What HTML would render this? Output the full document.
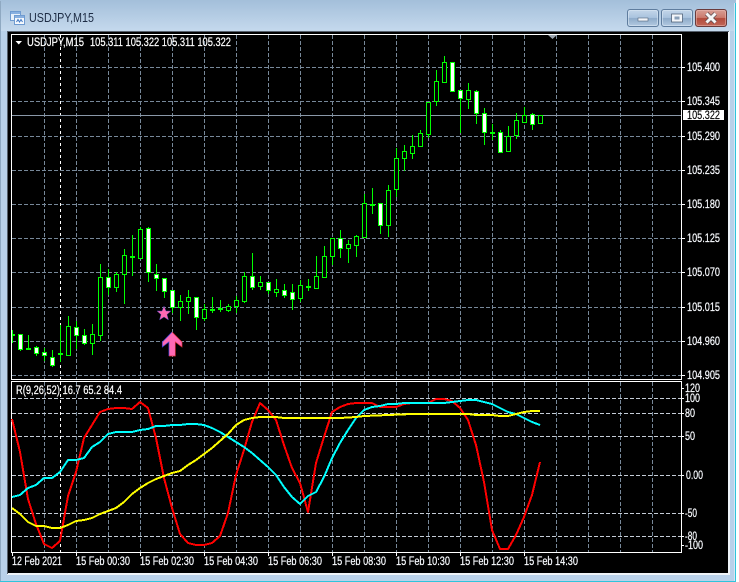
<!DOCTYPE html>
<html>
<head>
<meta charset="utf-8">
<title>USDJPY,M15</title>
<style>
html,body{margin:0;padding:0;background:#fff;width:739px;height:582px;overflow:hidden}
svg{display:block}
text{font-family:"Liberation Sans",sans-serif;font-size:11.5px;fill:#fff;stroke:#fff;stroke-width:.22px}
.ax{font-size:11.5px;fill:#f4f8ff}
.ttl{font-size:12.5px;fill:#1d2c44;stroke:none}
.blk{fill:#000;stroke:#000;stroke-width:.15px}
</style>
</head>
<body>
<svg width="739" height="582" viewBox="0 0 739 582" xmlns="http://www.w3.org/2000/svg">
<defs>
<linearGradient id="fr" x1="0" y1="0" x2="0" y2="1">
<stop offset="0" stop-color="#a9c4de"/><stop offset="0.05" stop-color="#b9d1e9"/><stop offset="1" stop-color="#b9d1ea"/>
</linearGradient>
<linearGradient id="ttl" x1="0" y1="0" x2="0" y2="1">
<stop offset="0" stop-color="#a3bfda"/><stop offset="1" stop-color="#c5d9ed"/>
</linearGradient>
<linearGradient id="btn" x1="0" y1="0" x2="0" y2="1">
<stop offset="0" stop-color="#c5d7ea"/><stop offset="0.48" stop-color="#a9c3de"/><stop offset="0.52" stop-color="#8eabca"/><stop offset="1" stop-color="#b4cbe2"/>
</linearGradient>
<linearGradient id="cls" x1="0" y1="0" x2="0" y2="1">
<stop offset="0" stop-color="#d8a096"/><stop offset="0.48" stop-color="#cb7a6d"/><stop offset="0.52" stop-color="#b24a3b"/><stop offset="1" stop-color="#c2685a"/>
</linearGradient>
</defs>

<!-- window frame -->
<path d="M0 582V5Q0 0 5 0H730Q736 0 736 5V582Z" fill="url(#fr)"/>
<rect x="0" y="0" width="736" height="31" fill="url(#ttl)"/>
<rect x="0" y="1" width="1" height="581" fill="#8fa9c2"/>
<rect x="0" y="581" width="736" height="1" fill="#2fc4dc"/>
<rect x="735" y="3" width="1" height="579" fill="#2fc4dc"/>
<rect x="734" y="3" width="1" height="578" fill="#d8e6f3"/>

<!-- title icon -->
<g shape-rendering="crispEdges">
<rect x="10.5" y="11.5" width="10" height="9" fill="#e9f1fa" stroke="#6f9bd0"/>
<rect x="11" y="12" width="9" height="2" fill="#88b0e0"/>
<rect x="14.5" y="15.5" width="10" height="9" fill="#f6f9fd" stroke="#6f9bd0"/>
<rect x="15" y="16" width="9" height="2" fill="#88b0e0"/>
</g>
<path d="M16.5 22L18 19.5L19.5 22L21 19.5L22.5 22" fill="none" stroke="#3f78c4" stroke-width="1"/>
<text class="ttl" x="29" y="22" textLength="65" lengthAdjust="spacingAndGlyphs">USDJPY,M15</text>

<!-- buttons -->
<rect x="627.5" y="9.5" width="31" height="17" rx="2.5" fill="url(#btn)" stroke="#5f7d9e"/>
<rect x="628.5" y="10.5" width="29" height="15" rx="2" fill="none" stroke="#dbe7f3" stroke-opacity=".6"/>
<rect x="638" y="18" width="10" height="3" fill="#f3f6fa" stroke="#53647a" stroke-width=".6"/>
<rect x="661.5" y="9.5" width="31" height="17" rx="2.5" fill="url(#btn)" stroke="#5f7d9e"/>
<rect x="662.5" y="10.5" width="29" height="15" rx="2" fill="none" stroke="#dbe7f3" stroke-opacity=".6"/>
<rect x="671.5" y="14" width="11" height="8" fill="#f3f6fa" stroke="#53647a" stroke-width=".8"/>
<rect x="674.5" y="16.5" width="5" height="3" fill="#8aa0b8"/>
<rect x="695.5" y="9.5" width="31" height="17" rx="2.5" fill="url(#cls)" stroke="#6a3b3c"/>
<rect x="696.5" y="10.5" width="29" height="15" rx="2" fill="none" stroke="#eebdb5" stroke-opacity=".5"/>
<path d="M706.5 13.5L715.5 22.5M715.5 13.5L706.5 22.5" stroke="#5a4a50" stroke-width="4.4"/>
<path d="M706.5 13.5L715.5 22.5M715.5 13.5L706.5 22.5" stroke="#f6f6f6" stroke-width="3"/>

<!-- client -->
<rect x="7" y="31" width="723" height="544" fill="#eef3f8"/>
<rect x="7" y="31" width="1" height="543" fill="#56606c"/>
<rect x="7" y="31" width="722" height="1" fill="#56606c"/>
<rect x="8" y="32" width="720" height="541" fill="#000"/>

<!-- grid main -->
<g shape-rendering="crispEdges" fill="none" stroke="#778899" stroke-width="1">
<path stroke-dasharray="4 2" d="M12 67.5H681M12 101.5H681M12 136.5H681M12 170.5H681M12 204.5H681M12 238.5H681M12 272.5H681M12 307.5H681M12 341.5H681M12 375.5H681"/>
<path stroke-dasharray="4 2" d="M44.5 35V379M76.5 35V379M108.5 35V379M140.5 35V379M172.5 35V379M204.5 35V379M236.5 35V379M268.5 35V379M300.5 35V379M332.5 35V379M364.5 35V379M396.5 35V379M428.5 35V379M460.5 35V379M492.5 35V379M524.5 35V379M556.5 35V379M588.5 35V379M620.5 35V379M652.5 35V379"/>
<path stroke-dasharray="4 2" d="M44.5 382V552M76.5 382V552M108.5 382V552M140.5 382V552M172.5 382V552M204.5 382V552M236.5 382V552M268.5 382V552M300.5 382V552M332.5 382V552M364.5 382V552M396.5 382V552M428.5 382V552M460.5 382V552M492.5 382V552M524.5 382V552M556.5 382V552M588.5 382V552M620.5 382V552M652.5 382V552"/>
<path stroke="#c4ccd6" stroke-dasharray="4 2" d="M12 398.5H681M12 413.5H681M12 436.5H681M12 475.5H681M12 513.5H681M12 536.5H681"/>
<path stroke="#fff" stroke-dasharray="3 3" d="M60.5 35V379M60.5 382V552"/>
<path stroke="#8a98a8" d="M12 115.5H681"/>
</g>

<!-- wicks -->
<path shape-rendering="crispEdges" fill="none" stroke="#00ff00" stroke-width="1" d="M12.5 330V343M20.5 334V351M28.5 335V350M36.5 346V356M44.5 348V361M52.5 350V367M60.5 325V362M68.5 316V355M76.5 321V349M84.5 329V345M92.5 324V355M100.5 264V341M108.5 269V295M116.5 272V292M124.5 249V304M132.5 235V276M140.5 227V258M148.5 227V282M156.5 264V291M164.5 278V298M172.5 290V313M180.5 295V321M188.5 290V314M196.5 297V330M204.5 304V321M212.5 297V313M220.5 300V312M228.5 304V312M236.5 296V313M244.5 272V303M252.5 253V290M260.5 276V290M268.5 282V294M276.5 279V297M284.5 284V298M292.5 284V310M300.5 280V302M308.5 279V291M316.5 256V289M324.5 246V277M332.5 238V265M340.5 230V258M348.5 240V263M356.5 235V257M364.5 194V237M372.5 188V214M380.5 203V234M388.5 185V237M396.5 148V197M404.5 145V171M412.5 135V159M420.5 130V146M428.5 102V138M436.5 70V106M444.5 56V83M460.5 90V133M468.5 83V109M476.5 90V124M484.5 108V145M492.5 124V140M500.5 130V152M508.5 126V152M516.5 113V139M524.5 107V123M532.5 113V130"/>
<!-- doji -->
<path shape-rendering="crispEdges" fill="none" stroke="#00ff00" stroke-width="2" d="M12 335H15M26 349H31M58 354H63M130 257H135M210 310H215M218 309H223M306 287H311M370 205H375M490 133H495"/>
<!-- hollow bodies -->
<path shape-rendering="crispEdges" fill="#000" stroke="#00ff00" stroke-width="1" d="M66.5 326.5h4V355.5h-4zM90.5 334.5h4V343.5h-4zM98.5 277.5h4V335.5h-4zM114.5 274.5h4V287.5h-4zM122.5 255.5h4V274.5h-4zM138.5 229.5h4V258.5h-4zM178.5 301.5h4V307.5h-4zM186.5 297.5h4V301.5h-4zM202.5 309.5h4V318.5h-4zM226.5 306.5h4V310.5h-4zM234.5 300.5h4V306.5h-4zM242.5 276.5h4V301.5h-4zM258.5 282.5h4V286.5h-4zM274.5 289.5h4V292.5h-4zM298.5 285.5h4V298.5h-4zM314.5 276.5h4V288.5h-4zM322.5 256.5h4V277.5h-4zM330.5 238.5h4V256.5h-4zM346.5 244.5h4V248.5h-4zM354.5 236.5h4V245.5h-4zM362.5 203.5h4V237.5h-4zM386.5 190.5h4V225.5h-4zM394.5 158.5h4V189.5h-4zM402.5 151.5h4V158.5h-4zM410.5 146.5h4V153.5h-4zM418.5 133.5h4V146.5h-4zM426.5 102.5h4V134.5h-4zM434.5 81.5h4V101.5h-4zM442.5 62.5h4V82.5h-4zM466.5 90.5h4V99.5h-4zM506.5 136.5h4V151.5h-4zM514.5 120.5h4V135.5h-4zM522.5 115.5h4V122.5h-4zM538.5 115.5h4V123.5h-4z"/>
<!-- filled bodies -->
<path shape-rendering="crispEdges" fill="#fff" stroke="#00ff00" stroke-width="1" d="M18.5 334.5h4V349.5h-4zM34.5 347.5h4V353.5h-4zM42.5 352.5h4V355.5h-4zM50.5 357.5h4V365.5h-4zM74.5 327.5h4V335.5h-4zM82.5 335.5h4V343.5h-4zM106.5 277.5h4V287.5h-4zM146.5 228.5h4V272.5h-4zM154.5 274.5h4V278.5h-4zM162.5 278.5h4V291.5h-4zM170.5 290.5h4V307.5h-4zM194.5 297.5h4V317.5h-4zM250.5 276.5h4V287.5h-4zM266.5 282.5h4V290.5h-4zM282.5 290.5h4V295.5h-4zM290.5 292.5h4V299.5h-4zM338.5 238.5h4V248.5h-4zM378.5 203.5h4V225.5h-4zM450.5 62.5h4V91.5h-4zM458.5 90.5h4V98.5h-4zM474.5 91.5h4V113.5h-4zM482.5 113.5h4V132.5h-4zM498.5 132.5h4V152.5h-4zM530.5 114.5h4V124.5h-4z"/>

<!-- star and arrow -->
<path d="M164 306L166 311L171 311L167 314.5L168.5 320L164 317L159.5 320L161 314.5L157 311L162 311Z" fill="#ff69b4" stroke="#4a3fb0" stroke-width=".5"/>
<path d="M172 332L182 342V347L175.3 342V356H168.9V342L162.3 347V342Z" fill="#ff69b4"/>
<path d="M172 332L162.3 342V347L168.9 342V356" fill="none" stroke="#3a3fd0" stroke-width=".7"/>
<path d="M172 332L182 342V347L175.3 342V356H168.9" fill="none" stroke="#e0303a" stroke-width=".7"/>

<!-- chart borders -->
<g shape-rendering="crispEdges" fill="none" stroke="#fff" stroke-width="1">
<path d="M11.5 34.5H681.5V379.5H11.5Z"/>
<path d="M11.5 381.5H681.5V552.5H11.5Z"/>
<path d="M681 67.5H685M681 101.5H685M681 136.5H685M681 170.5H685M681 204.5H685M681 238.5H685M681 272.5H685M681 307.5H685M681 341.5H685M681 375.5H685"/>
<path d="M681 388.5H684M681 398.5H684M681 413.5H684M681 436.5H684M681 475.5H684M681 513.5H684M681 536.5H684M681 545.5H684"/>
<path d="M12.5 552V556M76.5 552V556M140.5 552V556M204.5 552V556M268.5 552V556M332.5 552V556M396.5 552V556M460.5 552V556M524.5 552V556"/>
</g>
<path d="M548 35H557L552.5 39Z" fill="#9aa3ad"/>
<path d="M15.5 41H22L18.75 44.5Z" fill="#fff"/>

<!-- indicator lines -->
<g fill="none" stroke-width="2" stroke-linejoin="round" shape-rendering="crispEdges">
<polyline stroke="#ff0000" points="12,419 20,452 28,499 36,524 44,544 52,548 60,541 68,496 76,472 84,438 92,425 100,412 108,409 116,408 124,408 132,409 140,402 148,408 156,438 164,478 172,508 180,534 188,543 196,545 204,545 212,543 220,536 228,513 236,475 244,450 252,422 260,403 268,410 276,420 284,445 292,468 300,483 308,512 316,463 324,437 332,412 340,407 348,404 356,403 364,403 372,403 380,407 388,407 396,407 404,404 412,403 420,403 428,403 436,399 444,399 452,401 460,408 468,420 476,445 484,482 492,530 500,549 508,549 516,535 524,517 532,495 540,462"/>
<polyline stroke="#00ffff" points="12,497 20,495 28,488 36,485 44,478 52,478 60,472 68,460 76,460 84,458 92,447 100,442 108,434 116,432 124,432 132,432 140,430 148,429 156,426 164,426 172,425 180,425 188,424 196,424 204,425 212,428 220,432 228,437 236,442 244,447 252,453 260,460 268,467 276,475 284,487 292,497 300,504 308,496 316,492 324,477 332,458 340,443 348,430 356,418 364,410 372,407 380,406 388,404 396,404 404,403 412,403 420,403 428,403 436,403 444,403 452,402 460,401 468,400 476,400 484,402 492,404 500,408 508,412 516,414 524,418 532,422 540,425"/>
<polyline stroke="#ffff00" points="12,508 20,514 28,522 36,526 44,526 52,528 60,528 68,525 76,521 84,520 92,518 100,514 108,511 116,508 124,502 132,494 140,488 148,483 156,479 164,476 172,473 180,471 188,465 196,460 204,454 212,448 220,441 228,434 236,425 244,420 252,418 260,417 268,417 276,417 284,418 340,418 356,417 364,416 388,415 412,414 436,414 468,414 476,415 492,415 500,416 508,416 516,414 524,412 532,411 540,411"/>
</g>

<!-- labels -->
<text x="27" y="46" textLength="57" lengthAdjust="spacingAndGlyphs">USDJPY,M15</text>
<text x="90" y="46" textLength="141" lengthAdjust="spacingAndGlyphs">105.311 105.322 105.311 105.322</text>
<text x="16" y="394" textLength="106" lengthAdjust="spacingAndGlyphs">R(9,26,52) 16.7 65.2 84.4</text>

<g>
<text class="ax" x="687" y="71" textLength="33" lengthAdjust="spacingAndGlyphs">105.400</text>
<text class="ax" x="687" y="105" textLength="33" lengthAdjust="spacingAndGlyphs">105.345</text>
<text class="ax" x="687" y="140" textLength="33" lengthAdjust="spacingAndGlyphs">105.290</text>
<text class="ax" x="687" y="174" textLength="33" lengthAdjust="spacingAndGlyphs">105.235</text>
<text class="ax" x="687" y="208" textLength="33" lengthAdjust="spacingAndGlyphs">105.180</text>
<text class="ax" x="687" y="242" textLength="33" lengthAdjust="spacingAndGlyphs">105.125</text>
<text class="ax" x="687" y="276" textLength="33" lengthAdjust="spacingAndGlyphs">105.070</text>
<text class="ax" x="687" y="311" textLength="33" lengthAdjust="spacingAndGlyphs">105.015</text>
<text class="ax" x="687" y="345" textLength="33" lengthAdjust="spacingAndGlyphs">104.960</text>
<text class="ax" x="687" y="379" textLength="33" lengthAdjust="spacingAndGlyphs">104.905</text>
<rect x="683" y="110" width="41" height="10" fill="#fff"/>
<text class="blk" x="687" y="119" textLength="33" lengthAdjust="spacingAndGlyphs">105.322</text>

<text class="ax" x="685" y="392" textLength="15" lengthAdjust="spacingAndGlyphs">120</text>
<text class="ax" x="685" y="402" textLength="15" lengthAdjust="spacingAndGlyphs">100</text>
<text class="ax" x="685" y="417" textLength="10" lengthAdjust="spacingAndGlyphs">80</text>
<text class="ax" x="685" y="440" textLength="10" lengthAdjust="spacingAndGlyphs">50</text>
<text class="ax" x="686" y="479" textLength="17" lengthAdjust="spacingAndGlyphs">0.00</text>
<text class="ax" x="685" y="517" textLength="12" lengthAdjust="spacingAndGlyphs">-50</text>
<text class="ax" x="685" y="540" textLength="12" lengthAdjust="spacingAndGlyphs">-80</text>
<text class="ax" x="685" y="549" textLength="18" lengthAdjust="spacingAndGlyphs">-100</text>

<text class="ax" x="12" y="565" textLength="50" lengthAdjust="spacingAndGlyphs">12 Feb 2021</text>
<text class="ax" x="76" y="565" textLength="54" lengthAdjust="spacingAndGlyphs">15 Feb 00:30</text>
<text class="ax" x="140" y="565" textLength="54" lengthAdjust="spacingAndGlyphs">15 Feb 02:30</text>
<text class="ax" x="204" y="565" textLength="54" lengthAdjust="spacingAndGlyphs">15 Feb 04:30</text>
<text class="ax" x="268" y="565" textLength="54" lengthAdjust="spacingAndGlyphs">15 Feb 06:30</text>
<text class="ax" x="332" y="565" textLength="54" lengthAdjust="spacingAndGlyphs">15 Feb 08:30</text>
<text class="ax" x="396" y="565" textLength="54" lengthAdjust="spacingAndGlyphs">15 Feb 10:30</text>
<text class="ax" x="460" y="565" textLength="54" lengthAdjust="spacingAndGlyphs">15 Feb 12:30</text>
<text class="ax" x="524" y="565" textLength="54" lengthAdjust="spacingAndGlyphs">15 Feb 14:30</text>
</g>
</svg>
</body>
</html>
